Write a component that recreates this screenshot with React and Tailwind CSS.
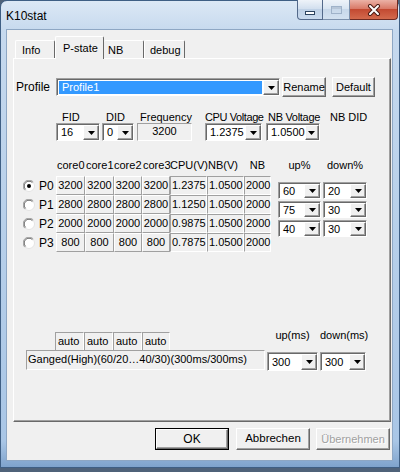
import React from 'react';

// classic win32 bevels
const raised = 'border border-t-white border-l-white border-r-[#696969] border-b-[#696969] shadow-[inset_-1px_-1px_0_#a0a0a0]';
const sunken = 'border border-t-[#a0a0a0] border-l-[#a0a0a0] border-r-white border-b-white';

const Arrow = () => (
  <div className={`w-[16px] h-full flex items-center justify-center bg-[#f0f0f0] ${raised}`}>
    <svg width="7" height="4" viewBox="0 0 7 4">
      <path d="M0 0h7L3.5 4z" fill="#000" />
    </svg>
  </div>
);

function Combo({ value, className = '', highlight = false }) {
  return (
    <div className={`flex bg-white ${sunken} shadow-[inset_1px_1px_0_#696969] pt-[1px] pl-[1px] ${className}`}>
      <div className={`flex-1 flex items-center pl-[3px] leading-none ${highlight ? 'bg-[#3399ff] text-white mx-[1px] my-[1px]' : ''}`}>
        {value}
      </div>
      <Arrow />
    </div>
  );
}

function Btn({ children, className = '', disabled = false }) {
  return (
    <div className={`flex items-center justify-center bg-[#f0f0f0] ${raised} ${disabled ? 'text-[#a0a0a0] [text-shadow:1px_1px_0_#fff]' : ''} ${className}`}>
      {children}
    </div>
  );
}

const Radio = ({ on }) => (
  <svg width="12" height="12" viewBox="0 0 12 12">
    <circle cx="6" cy="6" r="5.5" fill="#fff" stroke="#e3e3e3" />
    <path d="M1.8 10.2A5.5 5.5 0 0 1 10.2 1.8" stroke="#a0a0a0" fill="none" />
    <path d="M2.6 9.4A4.5 4.5 0 0 1 9.4 2.6" stroke="#696969" fill="none" />
    {on && <circle cx="6" cy="6" r="2" fill="#000" />}
  </svg>
);

const rows = [
  { p: 'P0', f: '3200', v: '1.2375', on: true },
  { p: 'P1', f: '2800', v: '1.1250' },
  { p: 'P2', f: '2000', v: '0.9875' },
  { p: 'P3', f: '800', v: '0.7875' },
];

const updown = [
  ['60', '20'],
  ['75', '30'],
  ['40', '30'],
];

function CoreCell({ value, className }) {
  return (
    <div className={`h-[19px] flex items-center justify-center bg-[#f0f0f0] border border-t-white border-l-white border-r-[#a0a0a0] border-b-[#a0a0a0] ${className}`}>
      {value}
    </div>
  );
}

function StatCell({ value, className }) {
  return (
    <div className={`h-[19px] flex items-center pl-[1px] bg-[#f0f0f0] ${sunken} ${className}`}>
      {value}
    </div>
  );
}

export default function App() {
  return (
    <div className="w-[400px] h-[472px] bg-[#4f6279] overflow-hidden font-['Liberation_Sans',Arial,sans-serif] text-[11px] text-black">
      <div className="h-[468px] rounded-t-[7px] border border-[#3f5f84] bg-[linear-gradient(to_bottom,#dce8f5_0px,#c6d9ee_30px,#b8d0ea_220px,#a9c6e6_440px,#7fa3cc_100%)] pl-[5px] pr-[6px] flex flex-col">
        {/* title bar */}
        <div className="h-[28px] flex items-start">
          <div className="pt-[8px] text-[12px] leading-[14px]">K10stat</div>
          <div className="ml-auto -mt-[1px] -mr-[5px] flex h-[20px]">
            <div className="w-[26px] flex items-center justify-center rounded-bl-[4px] border border-t-0 border-[#53698a] bg-[linear-gradient(to_bottom,#eef3f9,#d3e0ef_45%,#bfd1e6_50%,#c9daee)]">
              <div className="w-[10px] h-[4px] mt-[6px] bg-white border border-[#2d4460]" />
            </div>
            <div className="w-[27px] flex items-center justify-center border-y border-r border-t-0 border-[#7c91ad] bg-[linear-gradient(to_bottom,#eef3f9,#d9e5f2_45%,#c8d8ea_50%,#d3e1f0)]">
              <div className="w-[11px] h-[8px] border border-[#9fb2c9] shadow-[inset_0_2px_0_#b7c6d8]" />
            </div>
            <div className="w-[48px] flex items-center justify-center rounded-br-[4px] border border-t-0 border-l-0 border-[#6e2a22] bg-[linear-gradient(to_bottom,#ebb2a6,#d97a68_45%,#c34a32_50%,#d36a4d)]">
              <svg width="14" height="12" viewBox="0 0 14 12">
                <path d="M3 2l8 8M11 2l-8 8" stroke="#4a1b14" strokeWidth="4" strokeLinecap="round" />
                <path d="M3 2l8 8M11 2l-8 8" stroke="#fff" strokeWidth="2" strokeLinecap="round" />
              </svg>
            </div>
          </div>
        </div>

        {/* client */}
        <div className="h-[432px] border border-[#8ea7c4] bg-[#f0f0f0] flex flex-col pl-[6px] pr-[1px]">
          {/* tabs */}
          <div className="h-[28px] flex items-end">
            <div className="ml-[2px] w-[40px] h-[18px] pl-[6px] leading-[18px] border-t border-l border-t-white border-l-white border-r border-r-[#696969] rounded-t-[2px]">Info</div>
            <div className="relative z-10 -mb-[1px] w-[49px] h-[23px] pl-[7px] pt-[4px] leading-[14px] bg-[#f0f0f0] border-t border-l border-t-white border-l-white border-r border-r-[#696969] rounded-t-[2px]">P-state</div>
            <div className="w-[40px] h-[18px] pl-[4px] leading-[18px] border-t border-t-white border-r border-r-[#696969] rounded-t-[2px]">NB</div>
            <div className="w-[41px] h-[18px] pl-[5px] leading-[18px] border-t border-l border-t-white border-l-white border-r border-r-[#696969] rounded-t-[2px]">debug</div>
          </div>

          {/* panel */}
          <div className={`w-[378px] h-[364px] ${raised} flex flex-col`}>
            {/* profile */}
            <div className="mt-[18px] flex items-start h-[20px] pl-[2px]">
              <div className="w-[40px] leading-[20px] text-[12px]">Profile</div>
              <Combo value="Profile1" highlight className="w-[224px] h-[18px] mt-[1px]" />
              <Btn className="ml-[2px] w-[44px] h-[20px]">Rename</Btn>
              <Btn className="ml-[6px] w-[43px] h-[20px]">Default</Btn>
            </div>

            {/* FID/DID labels */}
            <div className="mt-[14px] h-[12px] leading-[12px] flex pl-[48px] whitespace-nowrap">
              <div className="w-[44px]">FID</div>
              <div className="w-[34px]">DID</div>
              <div className="w-[65px]">Frequency</div>
              <div className="w-[63px] tracking-[-0.4px]">CPU Voltage</div>
              <div className="w-[62px] tracking-[-0.3px]">NB Voltage</div>
              <div>NB DID</div>
            </div>
            <div className="flex pl-[42px] h-[18px]">
              <Combo value="16" className="w-[44px] h-[18px]" />
              <Combo value="0" className="ml-[2px] w-[32px] h-[18px]" />
              <div className={`ml-[3px] w-[55px] h-[18px] flex justify-center pt-[1px] leading-[13px] ${sunken}`}>3200</div>
              <Combo value="1.2375" className="ml-[13px] w-[57px] h-[18px]" />
              <Combo value="1.0500" className="ml-[4px] w-[54px] h-[18px]" />
            </div>

            {/* pstate table */}
            <div className="mt-[18px] flex items-start">
              <div className="flex flex-col">
                <div className="h-[12px] leading-[12px] flex pl-[42px] whitespace-nowrap">
                  <div className="w-[29px] pl-[1px]">core0</div>
                  <div className="w-[29px] pl-[1px]">core1</div>
                  <div className="w-[28px]">core2</div>
                  <div className="w-[28px] pl-[1px]">core3</div>
                  <div className="w-[37px]">CPU(V)</div>
                  <div className="w-[37px] pl-[1px]">NB(V)</div>
                  <div className="w-[27px] text-center">NB</div>
                </div>
                <div className="mt-[5px] flex flex-col">
                  {rows.map((r) => (
                    <div key={r.p} className="h-[19px] flex items-center">
                      <div className="ml-[9px] flex">
                        <Radio on={r.on} />
                      </div>
                      <div className="ml-[4px] w-[17px] text-[12px]">{r.p}</div>
                      <CoreCell value={r.f} className="w-[29px]" />
                      <CoreCell value={r.f} className="w-[29px]" />
                      <CoreCell value={r.f} className="w-[28px]" />
                      <CoreCell value={r.f} className="w-[28px]" />
                      <StatCell value={r.v} className="w-[37px]" />
                      <StatCell value="1.0500" className="w-[37px]" />
                      <StatCell value="2000" className="w-[27px] border-r-[#a0a0a0]" />
                    </div>
                  ))}
                </div>
              </div>

              <div className="ml-[7px] flex flex-col">
                <div className="h-[12px] leading-[12px] flex">
                  <div className="w-[43px] text-center">up%</div>
                  <div className="ml-[2px] w-[44px] text-center">down%</div>
                </div>
                <div className="mt-[11px] flex flex-col gap-[2px]">
                  {updown.map(([u, d], i) => (
                    <div key={i} className="flex">
                      <Combo value={u} className="w-[43px] h-[17px]" />
                      <Combo value={d} className="ml-[2px] w-[44px] h-[17px]" />
                    </div>
                  ))}
                </div>
              </div>
            </div>

            {/* bottom */}
            <div className="mt-[77px] flex items-start pl-[12px]">
              <div className="mt-[3px] flex flex-col">
                <div className="flex pl-[29px] h-[18px]">
                  <StatCell value="auto" className="w-[29px] h-[18px] pl-[2px]" />
                  <StatCell value="auto" className="w-[29px] h-[18px] pl-[2px]" />
                  <StatCell value="auto" className="w-[29px] h-[18px] pl-[2px]" />
                  <StatCell value="auto" className="w-[28px] h-[18px] pl-[2px] border-r-[#a0a0a0]" />
                </div>
                <div className={`w-[239px] h-[20px] pl-[1px] leading-[16px] whitespace-nowrap ${sunken}`}>
                  Ganged(High)(60/20…40/30)(300ms/300ms)
                </div>
              </div>
              <div className="ml-[2px] w-[51px] flex flex-col">
                <div className="h-[12px] leading-[12px] text-center">up(ms)</div>
                <Combo value="300" className="mt-[11px] w-[51px] h-[19px]" />
              </div>
              <div className="ml-[2px] w-[46px] flex flex-col">
                <div className="h-[12px] leading-[12px] text-center whitespace-nowrap">down(ms)</div>
                <Combo value="300" className="mt-[11px] w-[46px] h-[19px]" />
              </div>
            </div>
          </div>

          {/* dialog buttons */}
          <div className="mt-[6px] flex justify-end pr-[1px]">
            <div className="w-[74px] h-[22px] border border-black flex">
              <Btn className="flex-1 text-[12px]">OK</Btn>
            </div>
            <Btn className="ml-[7px] w-[74px] h-[22px] text-[11.5px]">Abbrechen</Btn>
            <Btn disabled className="ml-[6px] w-[74px] h-[22px] text-[11px]">Übernehmen</Btn>
          </div>
        </div>
      </div>
    </div>
  );
}
